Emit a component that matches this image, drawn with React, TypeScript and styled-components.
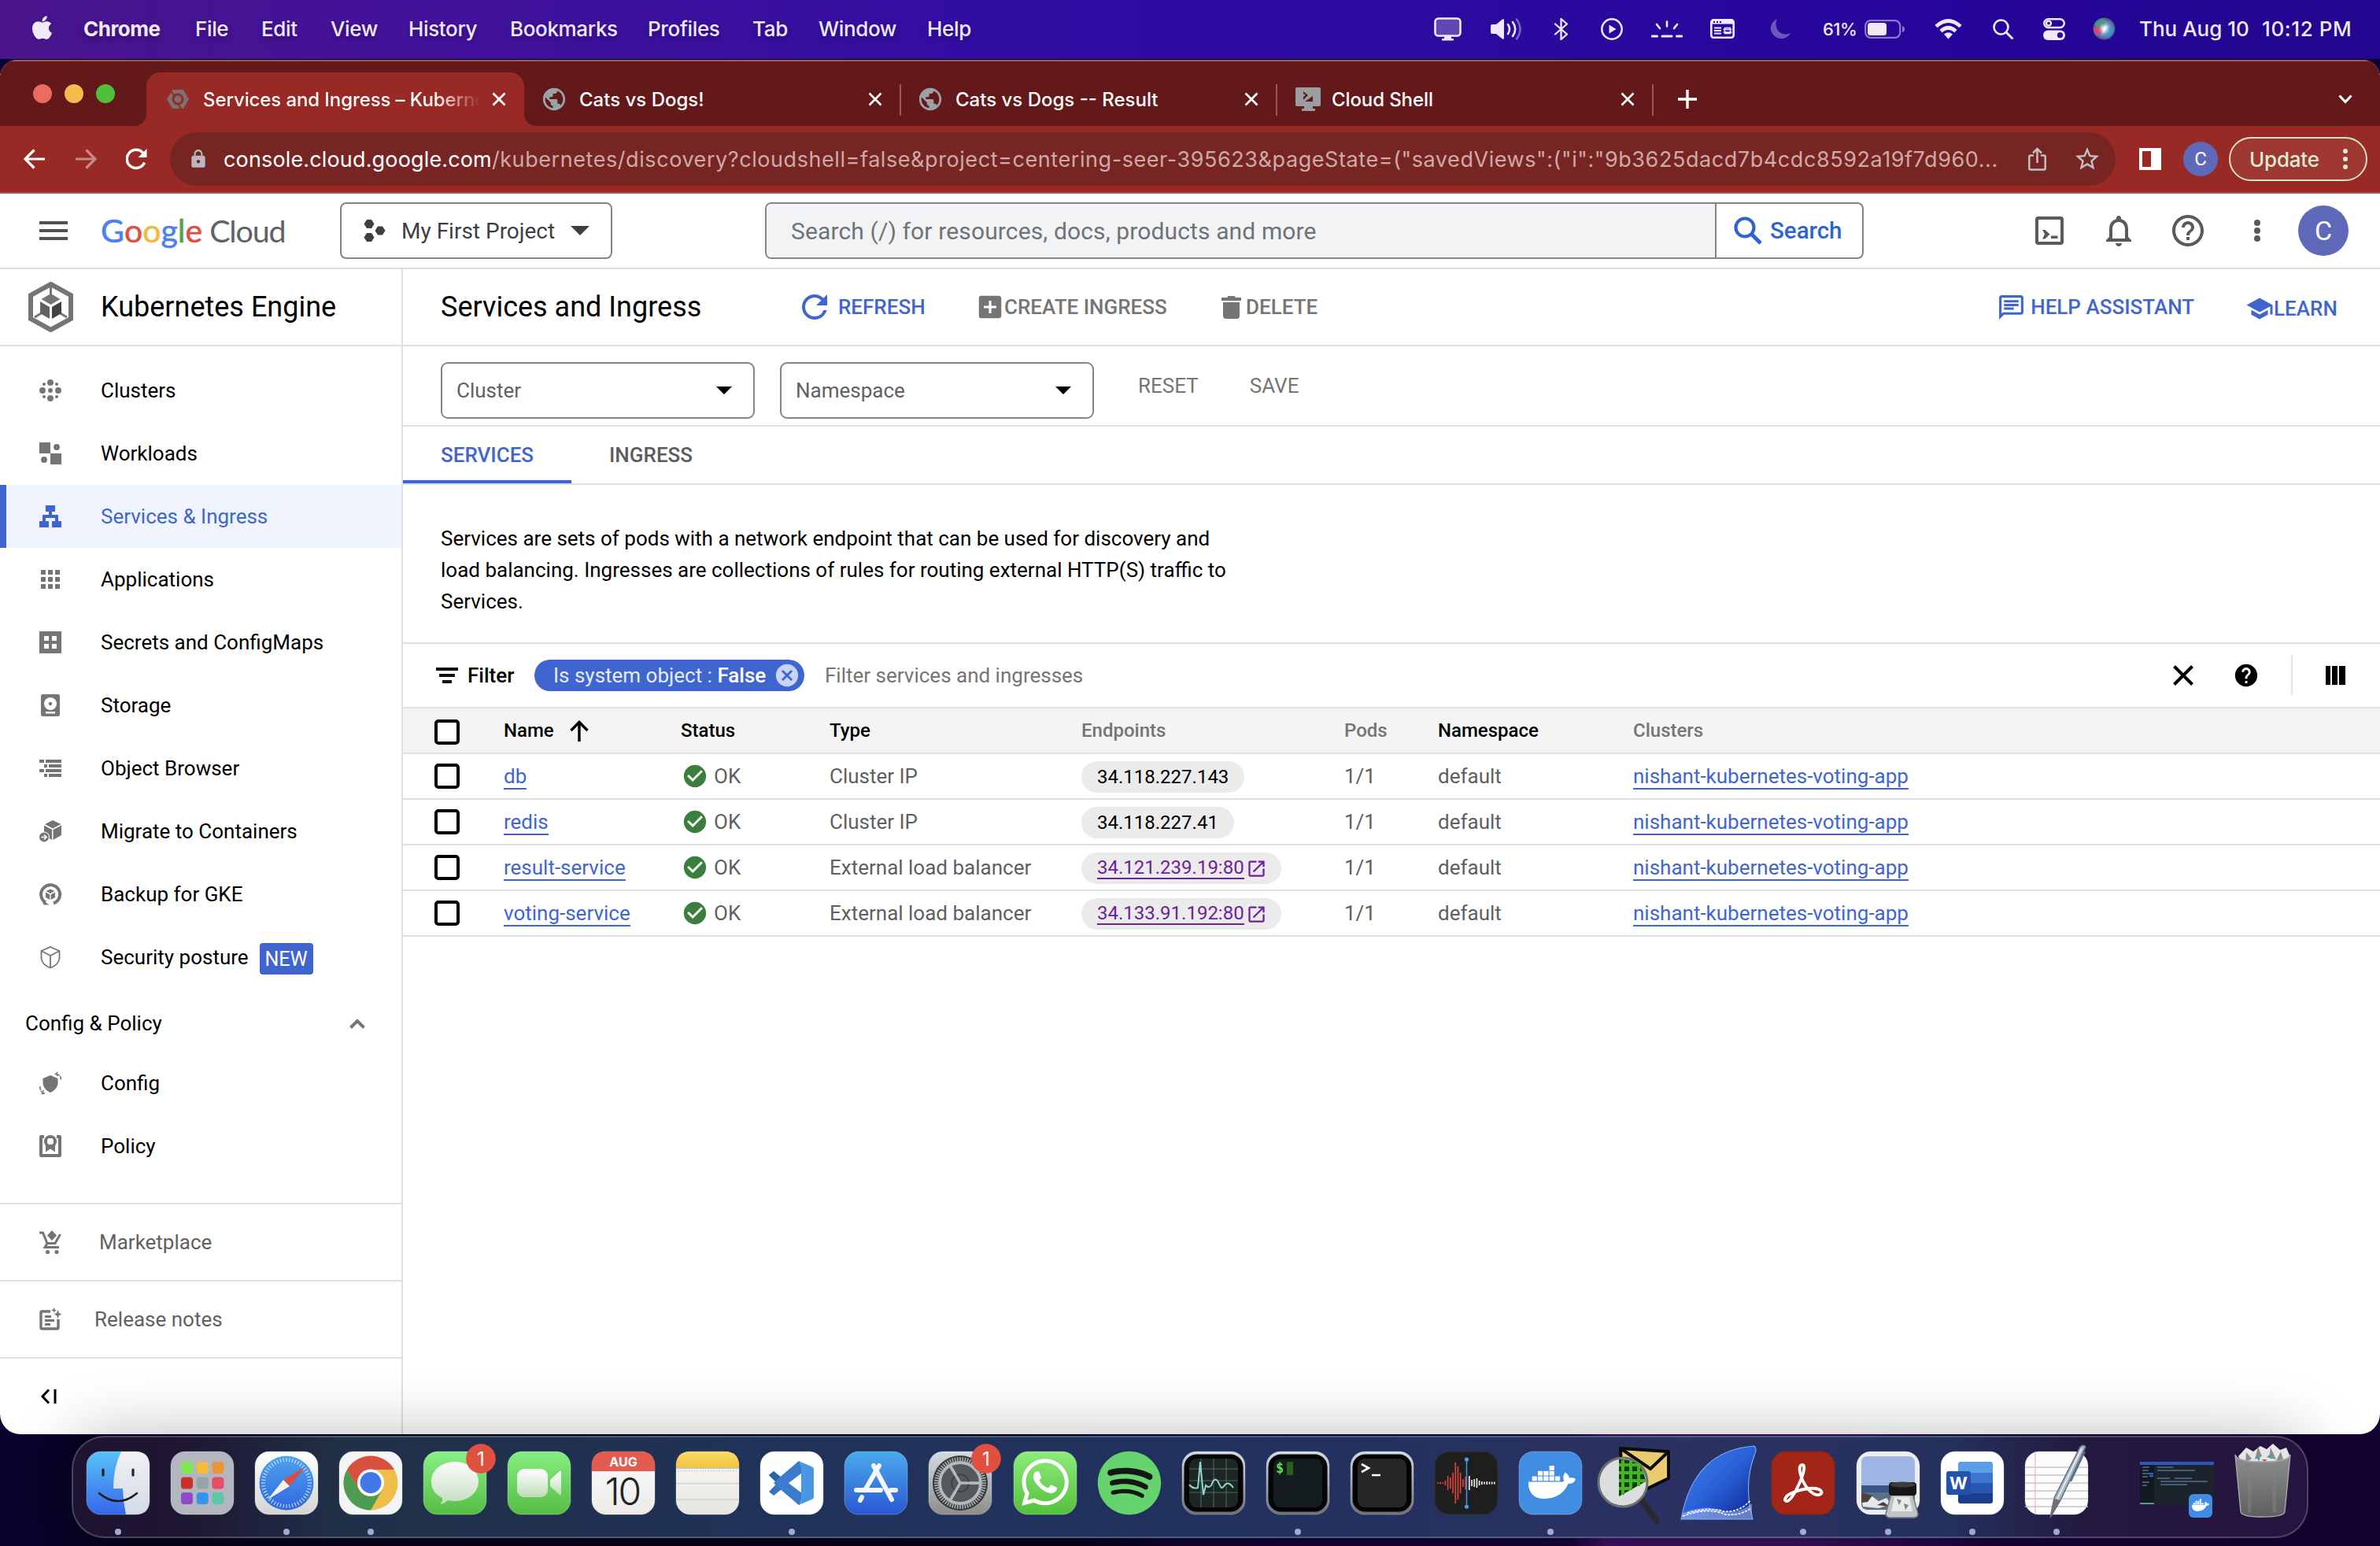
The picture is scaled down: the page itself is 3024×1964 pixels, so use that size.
import React from 'react';
import styled, { createGlobalStyle } from 'styled-components';
import { FaApple, FaDocker, FaWhatsapp, FaSpotify } from 'react-icons/fa';
import {
  MdPublic, MdLock, MdStarBorder, MdRefresh, MdHelpOutline, MdHelp, MdSchool,
  MdOutlineChat, MdNotificationsNone, MdCheckCircle, MdOpenInNew, MdCancel, MdAddBox,
} from 'react-icons/md';

const blue = '#3f66cf';
const ui = `Inter, "Liberation Sans", sans-serif`;
const roboto = `Roboto, "Liberation Sans", sans-serif`;

const Global = createGlobalStyle`
  *, *::before, *::after { box-sizing: border-box; }
  html, body { margin: 0; padding: 0; background: #07021a; overflow: hidden; }
  svg { display: block; flex: none; }
`;

const Desktop = styled.div`
  width: 3024px;
  height: 1964px;
  overflow: hidden;
  display: flex;
  flex-direction: column;
  font-family: ${ui};
  background: linear-gradient(90deg, #0b0330 0, #06021a 6%, #070218 45%, #120432 50%, #150436 66%, #3d1064 67.5%, #36105c 76%, #180338 84%, #12022f 100%);
`;

/* ---------- macOS menu bar ---------- */

const MenuBar = styled.header`
  height: 76px;
  flex: none;
  display: flex;
  align-items: center;
  padding: 0 32px 2px 40px;
  color: #efeaf8;
  font-size: 26px;
  border-bottom: 1px solid #000;
  background: linear-gradient(90deg, #49148b 0, #42129a 18%, #310da2 42%, #2a0a9f 62%, #26069a 82%, #22068f 100%);
`;
const MenuItem = styled.span<{ $w: number; $bold?: boolean; $ls?: number }>`
  width: ${(p) => p.$w}px;
  flex: none;
  white-space: nowrap;
  font-weight: ${(p) => (p.$bold ? 700 : 500)};
  letter-spacing: ${(p) => p.$ls ?? -0.35}px;
  text-shadow: 0 4px 6px rgba(0, 0, 0, 0.25);
`;
const AppleMark = styled(FaApple)`
  width: 66px;
  height: 34px;
  padding-right: 39px;
  margin-bottom: 4px;
  overflow: visible;
`;
const StatusArea = styled.div`
  margin-left: auto;
  display: flex;
  align-items: center;
`;
const StatusSlot = styled.span<{ $ml: number; $w: number; $fs?: number; $ls?: number }>`
  margin-left: ${(p) => p.$ml}px;
  width: ${(p) => p.$w}px;
  flex: none;
  white-space: nowrap;
  font-size: ${(p) => p.$fs ?? 26}px;
  font-weight: 500;
  letter-spacing: ${(p) => p.$ls ?? -0.4}px;
`;

const menu: { label: string; w: number; bold?: boolean; ls?: number }[] = [
  { label: 'Chrome', w: 142, bold: true, ls: -0.5 },
  { label: 'File', w: 84 },
  { label: 'Edit', w: 88 },
  { label: 'View', w: 99 },
  { label: 'History', w: 129 },
  { label: 'Bookmarks', w: 175 },
  { label: 'Profiles', w: 133 },
  { label: 'Tab', w: 84 },
  { label: 'Window', w: 138 },
  { label: 'Help', w: 70 },
];

const c = 'currentColor';

function TopMenu() {
  return (
    <MenuBar>
      <AppleMark />
      {menu.map((m) => (
        <MenuItem key={m.label} $w={m.w} $bold={m.bold} $ls={m.ls}>{m.label}</MenuItem>
      ))}
      <StatusArea>
        <StatusSlot $ml={0} $w={35}>
          <svg width="35" height="30" viewBox="0 0 35 30">
            <rect x="1.5" y="1.5" width="32" height="22" rx="4" fill="#5f48b6" stroke={c} strokeWidth="2.6" />
            <path d="M13 24h9v3h3v2.5H10V27h3z" fill={c} />
          </svg>
        </StatusSlot>
        <StatusSlot $ml={37} $w={40}>
          <svg width="40" height="28" viewBox="0 0 40 28">
            <path d="M0 10q0-2 2-2h5l8-6.5q2-1 2 1v23q0 2-2 1L7 20H2q-2 0-2-2z" fill={c} />
            <path d="M22 8q4 6 0 12M28 5q6.500 9 0 18" fill="none" stroke={c} strokeWidth="2.600" strokeLinecap="round" />
            <path d="M33 1.500q9 12.500 0 25" fill="none" stroke={c} strokeOpacity=".4" strokeWidth="2.600" strokeLinecap="round" />
          </svg>
        </StatusSlot>
        <StatusSlot $ml={40} $w={20}>
          <svg width="20" height="30" viewBox="0 0 20 30">
            <path d="M2 8.500l15 13-7.500 6.500V2L17 8.500 2 21.500" fill="none" stroke={c} strokeWidth="2.300" strokeLinejoin="round" strokeLinecap="round" />
          </svg>
        </StatusSlot>
        <StatusSlot $ml={40} $w={28}>
          <svg width="28" height="28" viewBox="0 0 28 28">
            <circle cx="14" cy="14" r="12.700" fill="none" stroke={c} strokeWidth="2.500" />
            <path d="M10.500 8.500v11l9-5.500z" fill={c} />
          </svg>
        </StatusSlot>
        <StatusSlot $ml={36} $w={40}>
          <svg width="40" height="22" viewBox="0 0 40 22">
            <path d="M20 1.500v6M7 5l4 5M33 5l-4 5" stroke={c} strokeWidth="2.600" strokeLinecap="round" />
            <path d="M1.500 20h6M14 20h12M32.500 20h6" stroke={c} strokeWidth="3.200" strokeLinecap="round" />
          </svg>
        </StatusSlot>
        <StatusSlot $ml={35} $w={31}>
          <svg width="31" height="25" viewBox="0 0 31 25">
            <rect x="1.300" y="1.300" width="28.400" height="22.400" rx="3" fill="none" stroke={c} strokeWidth="2.600" />
            <path d="M2 2h27v4.500H2z" fill={c} />
            <path d="M5 11.500h9M5 15h9M5 18.500h9" stroke={c} strokeWidth="2" />
            <path d="M18.500 11.500h7v7h-7zM16.500 13.500h11M16.500 17h11" fill="none" stroke={c} strokeWidth="1.400" />
            <path d="M4 4h2M8 4h2M12 4h2" stroke="#2a0a9f" strokeWidth="2" />
          </svg>
        </StatusSlot>
        <StatusSlot $ml={45} $w={27}>
          <svg width="27" height="28" viewBox="0 0 27 28">
            <path d="M9 1C1 5-2 14 4 21s17 7 22-2c-7 3-14 1-17-5-2-4-2-9 0-13z" fill={c} fillOpacity=".35" />
          </svg>
        </StatusSlot>
        <StatusSlot $ml={40} $w={46} $fs={22} $ls={-0.5}>61%</StatusSlot>
        <StatusSlot $ml={7} $w={51}>
          <svg width="51" height="24" viewBox="0 0 51 24">
            <rect x="1.200" y="1.200" width="44" height="21.600" rx="6.500" fill="none" stroke={c} strokeOpacity=".5" strokeWidth="2.200" />
            <rect x="4" y="4" width="24" height="16" rx="3.500" fill={c} />
            <path d="M48 8q3 1 3 4t-3 4z" fill={c} fillOpacity=".5" />
          </svg>
        </StatusSlot>
        <StatusSlot $ml={38} $w={35}>
          <svg width="35" height="26" viewBox="0 0 35 26">
            <path d="M2 9.500q15.500-14 31 0M8 15.500q9.500-8.500 19 0" fill="none" stroke={c} strokeWidth="4.600" />
            <path d="M17.500 25.500l-5.500-6q5.500-4.500 11 0z" fill={c} />
          </svg>
        </StatusSlot>
        <StatusSlot $ml={39} $w={26}>
          <svg width="26" height="26" viewBox="0 0 26 26">
            <circle cx="10.500" cy="10.500" r="9" fill="none" stroke={c} strokeWidth="2.600" />
            <path d="M17 17l7.500 7.500" stroke={c} strokeWidth="3" strokeLinecap="round" />
          </svg>
        </StatusSlot>
        <StatusSlot $ml={38} $w={28}>
          <svg width="28" height="28" viewBox="0 0 28 28">
            <rect x="1.200" y="1.200" width="25.600" height="10.800" rx="5.400" fill="none" stroke={c} strokeWidth="2.400" />
            <circle cx="7" cy="6.600" r="3" fill="none" stroke={c} strokeWidth="2.400" />
            <rect x="0" y="15.500" width="28" height="12.500" rx="6.200" fill={c} />
            <circle cx="21.500" cy="21.700" r="3.600" fill="#2a0a9f" />
          </svg>
        </StatusSlot>
        <StatusSlot $ml={35} $w={29}>
          <svg width="29" height="29" viewBox="0 0 29 29">
            <defs>
              <radialGradient id="siri" cx=".5" cy=".5" r=".6">
                <stop offset="0" stopColor="#f3f0fa" />
                <stop offset=".35" stopColor="#8aa6d8" />
                <stop offset="1" stopColor="#2b3a66" />
              </radialGradient>
              <radialGradient id="siriGlow">
                <stop offset="0" stopColor="#fff" />
                <stop offset="1" stopColor="#fff" stopOpacity="0" />
              </radialGradient>
            </defs>
            <circle cx="14.500" cy="14.500" r="14" fill="url(#siri)" />
            <path d="M2 9a14 14 0 0 1 12-8q4 6 0 12-6 3-12-4z" fill="#3f9d7a" fillOpacity=".75" />
            <path d="M1 12q8-2 13 3-4 8-10 8-4-4-3-11z" fill="#d8456e" fillOpacity=".8" />
            <path d="M16 16q6-6 11-4 1 9-8 15-5-5-3-11z" fill="#2f9bd0" fillOpacity=".6" />
            <circle cx="14.500" cy="14.500" r="7" fill="url(#siriGlow)" />
          </svg>
        </StatusSlot>
        <StatusSlot $ml={30} $w={156} $ls={0}>Thu Aug 10</StatusSlot>
        <StatusSlot $ml={0} $w={118} $ls={0.6}>10:12 PM</StatusSlot>
      </StatusArea>
    </MenuBar>
  );
}

/* ---------- Chrome window ---------- */

const Window = styled.main`
  height: 1746px;
  flex: none;
  display: flex;
  flex-direction: column;
  overflow: hidden;
  border-radius: 22px 22px 26px 26px;
  background: #fff;
`;
const TabStrip = styled.div`
  height: 84px;
  flex: none;
  display: flex;
  align-items: flex-end;
  background: #631819;
  border-top: 2px solid #95605f;
  color: #fff;
`;
const Lights = styled.div`
  width: 186px;
  height: 68px;
  padding: 15px 0 0 42px;
  display: flex;
  gap: 16px;
`;
const Light = styled.i<{ $c: string }>`
  width: 24px;
  height: 24px;
  border-radius: 50%;
  background: ${(p) => p.$c};
`;
const Tab = styled.div<{ $active?: boolean }>`
  width: ${(p) => (p.$active ? 480 : 478)}px;
  height: 68px;
  display: flex;
  align-items: center;
  padding: 0 23px 0 ${(p) => (p.$active ? 26 : 24)}px;
  position: relative;
  background: ${(p) => (p.$active ? '#992925' : 'transparent')};
  border-radius: 18px 18px 0 0;
  ${(p) =>
    p.$active &&
    `
    &::before, &::after {
      content: '';
      position: absolute;
      bottom: 0;
      width: 16px;
      height: 16px;
    }
    &::before { left: -16px; background: radial-gradient(circle at 0 0, transparent 16px, #992925 16.5px); }
    &::after { right: -16px; background: radial-gradient(circle at 100% 0, transparent 16px, #992925 16.5px); }
  `}
`;
const TabTitle = styled.span<{ $fade?: boolean; $ls?: number; $ml?: number }>`
  flex: 1;
  min-width: 0;
  overflow: hidden;
  white-space: nowrap;
  margin-left: ${(p) => p.$ml ?? 18}px;
  margin-right: 15px;
  font-size: 24px;
  font-weight: 500;
  letter-spacing: ${(p) => p.$ls ?? 0}px;
  ${(p) => p.$fade && '-webkit-mask-image: linear-gradient(90deg, #000 84%, transparent 100%);'}
`;
const Divider = styled.i`
  width: 2px;
  height: 40px;
  margin: 0 -1px 13px;
  background: #97595a;
`;
const TabTools = styled.div`
  flex: 1;
  height: 68px;
  display: flex;
  align-items: center;
  justify-content: space-between;
  padding: 0 35px 0 32px;
`;

const Cross = () => (
  <svg width="18" height="18" viewBox="0 0 18 18">
    <path d="M1.500 1.500l15 15M16.500 1.500l-15 15" stroke={c} strokeWidth="2.600" />
  </svg>
);
const Globe = styled(MdPublic)`
  width: 34px;
  height: 34px;
  margin: 0 -3px;
  color: #9aa2a8;
`;

function Tabs() {
  return (
    <TabStrip>
      <Lights>
        <Light $c="#ed6a5e" />
        <Light $c="#f4be4f" />
        <Light $c="#4fc138" />
      </Lights>
      <Tab $active>
        <svg width="28" height="26" viewBox="0 0 28 26">
          <path d="M7 1h14l7 12-7 12H7L0 13z" fill="#7b7173" />
          <circle cx="14" cy="13" r="6" fill="none" stroke="#992925" strokeWidth="3" />
          <path d="M5 3l6 7M14 19l5 7" stroke="#992925" strokeWidth="2" />
          <circle cx="14" cy="13" r="3.500" fill="#7b7173" />
        </svg>
        <TabTitle $fade $ls={-0.1}>Services and Ingress – Kubernetes</TabTitle>
        <Cross />
      </Tab>
      <Tab>
        <Globe />
        <TabTitle>Cats vs Dogs!</TabTitle>
        <Cross />
      </Tab>
      <Divider />
      <Tab>
        <Globe />
        <TabTitle>Cats vs Dogs -- Result</TabTitle>
        <Cross />
      </Tab>
      <Divider />
      <Tab>
        <svg width="32" height="30" viewBox="0 0 32 30">
          <path d="M2 0h28q2 0 2 2v20q0 2-2 2h-8v3h3v3H8v-3h3v-3H2q-2 0-2-2V2q0-2 2-2z" fill="#9a9ea3" />
          <path d="M10 5l6 5-6 6v-4l3-2-3-2zM22 11v7H12z" fill="#631819" />
        </svg>
        <TabTitle $ml={14} $ls={-0.1}>Cloud Shell</TabTitle>
        <Cross />
      </Tab>
      <Divider />
      <TabTools>
        <svg width="24" height="24" viewBox="0 0 24 24">
          <path d="M12 0v24M0 12h24" stroke={c} strokeWidth="3.400" />
        </svg>
        <svg width="18" height="12" viewBox="0 0 18 12">
          <path d="M1.500 1.500L9 9.500l7.500-8" fill="none" stroke={c} strokeWidth="3" />
        </svg>
      </TabTools>
    </TabStrip>
  );
}

const Toolbar = styled.div`
  height: 86px;
  flex: none;
  display: flex;
  align-items: center;
  padding: 0 16px 0 30px;
  color: #fff;
  background: #992925;
  border-bottom: 2px solid #b15452;
`;
const NavButtons = styled.div`
  width: 186px;
  display: flex;
  gap: 37px;
  align-items: center;
`;
const Omnibox = styled.div`
  width: 2472px;
  height: 68px;
  flex: none;
  display: flex;
  align-items: center;
  padding: 0 19px 0 24px;
  border-radius: 34px;
  background: #762523;
`;
const LockIcon = styled(MdLock)`
  width: 26px;
  height: 26px;
  margin: 0 19px 0 -1px;
  color: #b9b7bb;
`;
const Url = styled.span`
  flex: 1;
  white-space: nowrap;
  font-size: 27px;
  font-weight: 400;
  letter-spacing: 0.570px;
  color: #cfa9a8;
  b { font-weight: 400; color: #fff; letter-spacing: 0.150px; }
`;
const StarIcon = styled(MdStarBorder)`
  width: 36px;
  height: 36px;
  margin-left: 34px;
  margin-right: -1px;
  color: #c3bfc2;
`;
const Avatar = styled.span<{ $s: number; $fs: number; $ml: number }>`
  width: ${(p) => p.$s}px;
  height: ${(p) => p.$s}px;
  margin-left: ${(p) => p.$ml}px;
  flex: none;
  border-radius: 50%;
  background: #5e69ba;
  color: #fff;
  display: flex;
  align-items: center;
  justify-content: center;
  font-family: ${roboto};
  font-size: ${(p) => p.$fs}px;
`;
const UpdatePill = styled.div`
  margin-left: 14px;
  width: 176px;
  height: 56px;
  border: 2px solid #d6e0c9;
  border-radius: 28px;
  background: #9f3733;
  color: #d9ecd2;
  display: flex;
  align-items: center;
  justify-content: space-between;
  padding: 0 23px 0 24px;
  font-size: 26px;
  font-weight: 500;
  letter-spacing: -0.2px;
`;

function AddressBar() {
  return (
    <Toolbar>
      <NavButtons>
        <svg width="28" height="26" viewBox="0 0 28 26">
          <path d="M27 13H3M13.500 1.500L2 13l11.500 11.500" fill="none" stroke={c} strokeWidth="3.200" />
        </svg>
        <svg width="28" height="26" viewBox="0 0 28 26" opacity=".45">
          <path d="M1 13h24M14.500 1.500L26 13 14.500 24.500" fill="none" stroke={c} strokeWidth="3.200" />
        </svg>
        <svg width="27" height="28" viewBox="1 0 27 28">
          <path d="M24.500 18.500A11.600 11.600 0 1 1 22.500 6.200L25 9" fill="none" stroke={c} strokeWidth="3.400" />
          <path d="M27.500 1v11h-11z" fill={c} />
        </svg>
      </NavButtons>
      <Omnibox>
        <LockIcon />
        <Url><b>console.cloud.google.com</b>/kubernetes/discovery?cloudshell=false&amp;project=centering-seer-395623&amp;pageState=("savedViews":("i":"9b3625dacd7b4cdc8592a19f7d960...</Url>
        <svg width="23" height="30" viewBox="0 0 23 30">
          <path d="M7 10.500H2.500q-1.200 0-1.200 1.500v14.500q0 2 1.800 2h17q1.600 0 1.600-2V12q0-1.500-1.200-1.500H16M11.500 20V2.500M6 7.500l5.500-5.500L17 7.500" fill="none" stroke="#c3bfc2" strokeWidth="2.500" />
        </svg>
        <StarIcon />
      </Omnibox>
      <svg width="58" height="28" viewBox="0 0 58 28">
        <path d="M30 0h28v28H30zM34 4v20h11V4z" fill={c} fillRule="evenodd" />
      </svg>
      <Avatar $s={44} $fs={24} $ml={28}>C</Avatar>
      <UpdatePill>
        Update
        <svg width="6" height="26" viewBox="0 0 6 26" fill={c}>
          <circle cx="3" cy="3" r="3" /><circle cx="3" cy="13" r="3" /><circle cx="3" cy="23" r="3" />
        </svg>
      </UpdatePill>
    </Toolbar>
  );
}

/* ---------- Google Cloud header ---------- */

const Page = styled.div`
  flex: 1;
  display: flex;
  flex-direction: column;
  font-family: ${roboto};
  font-size: 26px;
  color: #000;
`;
const CloudHeader = styled.div`
  height: 96px;
  flex: none;
  display: flex;
  align-items: center;
  padding: 0 40px 0 50px;
  border-bottom: 2px solid #dadce0;
`;
const Logo = styled.div`
  width: 301px;
  padding-left: 42px;
  display: flex;
  align-items: baseline;
  font-family: Lato, ${roboto};
  font-size: 41px;
  line-height: 48px;
`;
const LogoLetter = styled.span<{ $c: string }>`
  color: ${(p) => p.$c};
  -webkit-text-stroke: 0.6px ${(p) => p.$c};
`;
const LogoCloud = styled.span`
  margin-left: 9px;
  font-size: 39.500px;
  letter-spacing: -1.200px;
  color: #5f6368;
`;
const ProjectPicker = styled.div`
  width: 346px;
  height: 72px;
  margin-left: 45px;
  flex: none;
  display: flex;
  align-items: center;
  padding: 0 27px 0 28px;
  border: 2px solid #80868b;
  border-radius: 8px;
  font-size: 28px;
  color: #3c4043;
  span { flex: 1; margin-left: 20px; white-space: nowrap; }
`;
const SearchBox = styled.div`
  width: 1396px;
  height: 72px;
  margin-left: 194px;
  flex: none;
  display: flex;
  border: 2px solid #80868b;
  border-radius: 8px;
  overflow: hidden;
  background: #fff;
`;
const SearchInput = styled.div`
  width: 1207px;
  padding-left: 31px;
  display: flex;
  align-items: center;
  font-size: 30px;
  letter-spacing: 0.130px;
  background: #f1f3f4;
  color: #6f7377;
  border-right: 2px solid #80868b;
`;
const SearchButton = styled.div`
  flex: 1;
  display: flex;
  align-items: center;
  gap: 10px;
  padding-left: 22px;
  font-size: 29.500px;
  font-weight: 500;
  color: #2f63d0;
`;
const HeaderTools = styled.div`
  margin-left: auto;
  display: flex;
  align-items: center;
  color: #5a5a5a;
`;
const Bell = styled(MdNotificationsNone)`
  width: 48px;
  height: 48px;
  margin-left: 46px;
`;
const HelpRound = styled(MdHelpOutline)`
  width: 48px;
  height: 48px;
  margin-left: 40px;
`;

const Caret = ({ w, h, color }: { w: number; h: number; color: string }) => (
  <svg width={w} height={h} viewBox="0 0 20 10" preserveAspectRatio="none"><path d="M0 0h20L10 10z" fill={color} /></svg>
);

function GoogleHeader() {
  const g = ['#4a82ee', '#dd5144', '#f0bb41', '#4a82ee', '#4da553', '#dd5144'];
  return (
    <CloudHeader>
      <svg width="36" height="24" viewBox="0 0 36 24" fill="#525252">
        <path d="M0 0h36v4H0zM0 10h36v4H0zM0 20h36v4H0z" />
      </svg>
      <Logo>
        {'Google'.split('').map((ch, i) => <LogoLetter key={i} $c={g[i]}>{ch}</LogoLetter>)}
        <LogoCloud>Cloud</LogoCloud>
      </Logo>
      <ProjectPicker>
        <svg width="28" height="28" viewBox="0 0 28 28" fill="#3c4043">
          <path d="M4 0h6l3.500 5.500L10 11H4L.5 5.500zM4 17h6l3.500 5.500L10 28H4L.5 22.500zM18 8.500h6l3.500 5.500-3.500 5.500h-6L14.500 14z" />
        </svg>
        <span>My First Project</span>
        <Caret w={24} h={12} color="#3c4043" />
      </ProjectPicker>
      <SearchBox>
        <SearchInput>Search (/) for resources, docs, products and more</SearchInput>
        <SearchButton>
          <svg width="36" height="36" viewBox="0 0 36 36">
            <circle cx="14" cy="14" r="11.500" fill="none" stroke={c} strokeWidth="4.200" />
            <path d="M22 22l12 12" stroke={c} strokeWidth="5" />
          </svg>
          Search
        </SearchButton>
      </SearchBox>
      <HeaderTools>
        <svg width="36" height="36" viewBox="0 0 36 36">
          <rect x="2" y="2" width="32" height="32" rx="2" fill="none" stroke={c} strokeWidth="4" />
          <path d="M9 17h3.500l6 5.500-6 6H9l3-6zM20 24.500h8.500v3.500H20z" fill={c} />
        </svg>
        <Bell />
        <HelpRound />
        <svg width="68" height="28" viewBox="0 0 68 28" fill={c}>
          <circle cx="64" cy="4" r="4" />
          <circle cx="64" cy="14" r="4" /><circle cx="64" cy="24" r="4" />
        </svg>
        <Avatar $s={64} $fs={34} $ml={48}>C</Avatar>
      </HeaderTools>
    </CloudHeader>
  );
}

/* ---------- Sidebar ---------- */

const Body = styled.div`
  flex: 1;
  display: flex;
  min-height: 0;
`;
const Sidebar = styled.nav`
  width: 512px;
  flex: none;
  display: flex;
  flex-direction: column;
  border-right: 2px solid #e0e0e0;
`;
const SideTitle = styled.div`
  height: 98px;
  flex: none;
  display: flex;
  align-items: center;
  gap: 35px;
  padding: 0 0 0 36px;
  border-bottom: 2px solid #e0e0e0;
  font-size: 36px;
  white-space: nowrap;
`;
const NavList = styled.div`
  height: 1088px;
  padding-top: 16px;
  display: flex;
  flex-direction: column;
`;
const NavRow = styled.div<{ $active?: boolean }>`
  height: 80px;
  flex: none;
  display: flex;
  align-items: center;
  gap: 50px;
  padding-left: ${(p) => (p.$active ? 42 : 50)}px;
  border-left: ${(p) => (p.$active ? `8px solid ${blue}` : '0')};
  background: ${(p) => (p.$active ? '#f0f4fe' : 'transparent')};
  color: ${(p) => (p.$active ? blue : '#000')};
  svg { color: ${(p) => (p.$active ? blue : '#757575')}; }
`;
const NewBadge = styled.span`
  margin: 4px 0 0 -36px;
  width: 68px;
  height: 40px;
  border-radius: 4px;
  background: ${blue};
  color: #fff;
  font-size: 25px;
  display: flex;
  align-items: center;
  justify-content: center;
`;
const SectionRow = styled.div`
  height: 80px;
  flex: none;
  display: flex;
  align-items: center;
  justify-content: space-between;
  padding: 8px 46px 0 32px;
`;
const FooterRow = styled.div<{ $gap: number }>`
  height: 98px;
  flex: none;
  display: flex;
  align-items: center;
  gap: ${(p) => p.$gap}px;
  padding-left: 50px;
  border-top: 2px solid #e0e0e0;
  color: #616161;
  svg { color: #757575; }
`;
const CollapseRow = styled(FooterRow)`
  svg { color: #000; }
`;

const Ico = ({ children }: { children: React.ReactNode }) => (
  <svg width="28" height="28" viewBox="0 0 28 28" fill={c} overflow="visible">{children}</svg>
);

const icons: Record<string, React.ReactNode> = {
  Clusters: (
    <Ico>
      <circle cx="14" cy="14" r="3" /><circle cx="14" cy="4" r="4" /><circle cx="14" cy="24" r="4" />
      <circle cx="4" cy="14" r="4" /><circle cx="24" cy="14" r="4" />
      <circle cx="6" cy="6" r="2" /><circle cx="22" cy="6" r="2" /><circle cx="6" cy="22" r="2" /><circle cx="22" cy="22" r="2" />
    </Ico>
  ),
  Workloads: <Ico><path d="M0 0h14v14H0zM14 14h14v14H14z" /><circle cx="22" cy="6" r="4" /><circle cx="6" cy="22" r="4" /></Ico>,
  'Services & Ingress': (
    <Ico><path d="M8 0h12v8h-4v4h8v8h4v8H16v-8h4v-4H8v4h4v8H0v-8h4v-8h8V8H8z" /></Ico>
  ),
  Applications: <Ico><path d="M2 2h6v6H2zM11 2h6v6h-6zM20 2h6v6h-6zM2 11h6v6H2zM11 11h6v6h-6zM20 11h6v6h-6zM2 20h6v6H2zM11 20h6v6h-6zM20 20h6v6h-6z" /></Ico>,
  'Secrets and ConfigMaps': <Ico><path fillRule="evenodd" d="M0 0h28v28H0zM6 6v6h6V6zM16 6v6h6V6zM6 16v6h6v-6zM16 16v6h6v-6z" /></Ico>,
  Storage: (
    <Ico>
      <rect x="2" y="0" width="24" height="28" rx="2" />
      <circle cx="14" cy="12" r="8" fill="#fff" /><circle cx="14" cy="12" r="2.200" />
      <path d="M8 22h12v2.500H8z" fill="#fff" />
    </Ico>
  ),
  'Object Browser': <Ico><path d="M0 3h6v4H0zM8 3h20v4H8zM6 9h4v4H6zM12 9h16v4H12zM0 15h6v4H0zM8 15h20v4H8zM6 21h4v4H6zM12 21h16v4H12z" /></Ico>,
  'Migrate to Containers': (
    <Ico>
      <path d="M17 0l10.500 5-10.500 5.500L7 5zM6 6.500l10 5.500V25l-4-2-6-6zM28 6.500V19l-10.500 6V12z" />
      <circle cx="6" cy="21.500" r="7" fill="#fff" /><circle cx="6" cy="21.500" r="6" />
      <path d="M2.500 21.500h6M6 18.500l3 3-3 3" fill="none" stroke="#fff" strokeWidth="1.500" />
    </Ico>
  ),
  'Backup for GKE': (
    <Ico>
      <path d="M8 24.500A12 12 0 1 1 18 25.500" fill="none" stroke={c} strokeWidth="4" />
      <path d="M3 21l9.500 6.500H5.500z" />
      <path d="M14 7.500l5.500 2.500-5.500 3-5.500-3zM8 11.500l5.300 3V21L8 18zM20 11.500V18l-5.300 3v-6.500z" />
    </Ico>
  ),
  'Security posture': (
    <Ico><path d="M14 1l11.500 5v9q-1 9-11.500 12.500Q3.500 24 2.500 15V6zM2.500 6L14 12l11.500-6M14 12v15" fill="none" stroke={c} strokeWidth="1.800" /></Ico>
  ),
  Config: (
    <Ico>
      <path d="M14 4l9.500 4v7q-1 7-9.500 11Q5.500 22 4.500 15V8z" />
      <path d="M21 2.500q6 0 6.500 7M23.500 0L20.500 2.500l3 2.500M6 27Q0 24 1 17M2.500 27.500l3.500-.5-1-4" fill="none" stroke={c} strokeWidth="1.600" strokeDasharray="5 1" />
    </Ico>
  ),
  Policy: (
    <Ico>
      <path d="M6 2H2v24h24V2h-4" fill="none" stroke={c} strokeWidth="4" strokeLinejoin="round" />
      <circle cx="14" cy="8" r="6" fill="none" stroke={c} strokeWidth="4" />
      <path d="M8 12h12v9.500l-6-4-6 4z" /><circle cx="14" cy="8" r="4" fill="#fff" />
    </Ico>
  ),
  Marketplace: (
    <Ico>
      <path d="M0 2h4.500l5.500 13.500h10L26.500 4M10 15.500L7 20.500h18" fill="none" stroke={c} strokeWidth="3" />
      <path d="M16 -1l6 6.500-6 6.500-6-6.500z" /><circle cx="10.500" cy="26.500" r="2.600" /><circle cx="22" cy="26.500" r="2.600" />
    </Ico>
  ),
  'Release notes': (
    <Ico>
      <path d="M14 4H3.500Q2 4 2 5.500v19Q2 26 3.500 26h19q1.500 0 1.500-1.500V14" fill="none" stroke={c} strokeWidth="3.400" />
      <path d="M7 9h8v3H7zM7 14h12v3H7zM7 19h7v3H7z" />
      <path d="M23.500 2l1.500 4 3.500 1.500L25 9l-1.500 4L22 9l-3.500-1.500L22 6zM18.500-1l1 2.500 2.500 1-2.500 1-1 2.500-1-2.500-2.500-1 2.500-1z" />
    </Ico>
  ),
};

const nav = [
  'Clusters', 'Workloads', 'Services & Ingress', 'Applications', 'Secrets and ConfigMaps',
  'Storage', 'Object Browser', 'Migrate to Containers', 'Backup for GKE', 'Security posture',
];

function SideNav() {
  return (
    <Sidebar>
      <SideTitle>
        <svg width="57" height="64" viewBox="0 0 57 64">
          <path d="M28.500 3L54 17v30L28.500 61 3 47V17z" fill="none" stroke="#757575" strokeWidth="6" />
          <path d="M28.500 4v14M8 45l10-6M49 45l-10-6" stroke="#757575" strokeWidth="3" />
          <path d="M28.500 15l12 7-12 7-12-7z" fill="#757575" />
          <path d="M15 25l12 7v15l-12-7z" fill="#616161" />
          <path d="M42 25l-12 7v15l12-7z" fill="#424242" />
        </svg>
        Kubernetes Engine
      </SideTitle>
      <NavList>
        {nav.map((n) => (
          <NavRow key={n} $active={n === 'Services & Ingress'}>
            {icons[n]}
            <span>{n}</span>
            {n === 'Security posture' && <NewBadge>NEW</NewBadge>}
          </NavRow>
        ))}
        <SectionRow>
          Config &amp; Policy
          <svg width="20" height="13" viewBox="0 0 20 13">
            <path d="M1.500 11.500l8.500-8.500 8.500 8.500" fill="none" stroke="#757575" strokeWidth="4" />
          </svg>
        </SectionRow>
        {['Config', 'Policy'].map((n) => (
          <NavRow key={n}>{icons[n]}<span>{n}</span></NavRow>
        ))}
      </NavList>
      <FooterRow $gap={48}>{icons.Marketplace}Marketplace</FooterRow>
      <FooterRow $gap={42}>{icons['Release notes']}Release notes</FooterRow>
      <CollapseRow $gap={0}>
        <svg width="24" height="20" viewBox="0 0 24 20">
          <path d="M12 1.500L4 10l8 8.500M20 1v18" fill="none" stroke={c} strokeWidth="3" />
        </svg>
      </CollapseRow>
    </Sidebar>
  );
}

/* ---------- Content ---------- */

const Content = styled.section`
  flex: 1;
  min-width: 0;
  display: flex;
  flex-direction: column;
`;
const TitleBar = styled.div`
  height: 98px;
  flex: none;
  display: flex;
  align-items: center;
  padding: 0 54px 0 48px;
  border-bottom: 2px solid #e0e0e0;
`;
const PageTitle = styled.h1`
  margin: 0;
  width: 451px;
  font-size: 36px;
  font-weight: 400;
  white-space: nowrap;
`;
const Action = styled.span<{ $c: string; $ml?: number; $w?: number; $gap?: number; $dy?: number }>`
  display: flex;
  align-items: center;
  flex: none;
  gap: ${(p) => p.$gap ?? 0}px;
  margin-left: ${(p) => p.$ml ?? 0}px;
  padding-top: ${(p) => p.$dy ?? 0}px;
  width: ${(p) => (p.$w ? `${p.$w}px` : 'auto')};
  color: ${(p) => p.$c};
  font-weight: 500;
  white-space: nowrap;
`;
const RefreshIcon = styled(MdRefresh)`width: 48px; height: 48px;`;
const AddIcon = styled(MdAddBox)`width: 38px; height: 38px; margin: 0 -1px 0 -5px;`;
const ChatIcon = styled(MdOutlineChat)`width: 37px; height: 37px;`;
const SchoolIcon = styled(MdSchool)`width: 36px; height: 36px;`;

const FilterRow = styled.div`
  height: 102px;
  flex: none;
  display: flex;
  align-items: flex-start;
  padding: 20px 0 0 48px;
  border-bottom: 2px solid #e0e0e0;
`;
const Select = styled.div`
  width: 399px;
  height: 72px;
  margin-right: 32px;
  display: flex;
  align-items: center;
  justify-content: space-between;
  padding: 0 27px 0 18px;
  border: 2px solid #80868b;
  border-radius: 9px;
  color: #616161;
`;
const GhostButton = styled.span<{ $ml: number }>`
  margin-left: ${(p) => p.$ml}px;
  line-height: 60px;
  color: #757575;
  font-size: 26px;
`;
const TabRow = styled.div`
  height: 74px;
  flex: none;
  display: flex;
  border-bottom: 2px solid #e0e0e0;
`;
const PageTab = styled.div<{ $active?: boolean; $w: number }>`
  width: ${(p) => p.$w}px;
  height: 72px;
  display: flex;
  align-items: center;
  padding: ${(p) => (p.$active ? 4 : 0)}px 0 0 48px;
  font-weight: 500;
  color: ${(p) => (p.$active ? blue : '#5c5c5c')};
  border-bottom: ${(p) => (p.$active ? `4px solid ${blue}` : '0')};
`;
const Intro = styled.p`
  margin: 0;
  height: 202px;
  flex: none;
  padding: 48px 0 0 48px;
  line-height: 40px;
  border-bottom: 2px solid #e0e0e0;
  white-space: pre-line;
`;
const FilterBar = styled.div`
  height: 82px;
  flex: none;
  display: flex;
  align-items: center;
  padding: 0 44px 0 42px;
  border-bottom: 2px solid #e0e0e0;
`;
const FilterLabel = styled.span`
  width: 97px;
  padding-left: 12px;
  font-weight: 500;
`;
const FilterChip = styled.span`
  width: 343px;
  height: 40px;
  flex: none;
  display: flex;
  align-items: center;
  justify-content: space-between;
  border-radius: 20px;
  padding: 0 5px 0 24px;
  background: ${blue};
  color: #e6ecfb;
  white-space: pre;
  b { font-weight: 500; color: #fff; }
`;
const ChipCancel = styled(MdCancel)`width: 34px; height: 34px; color: #c9d4f4;`;
const Placeholder = styled.span`
  flex: 1;
  margin-left: 26px;
  color: #757575;
`;
const BarTools = styled.div`
  display: flex;
  align-items: center;
`;
const HelpFilled = styled(MdHelp)`width: 34px; height: 34px; margin: 0 40px 0 50px;`;
const BarDivider = styled.i`width: 2px; height: 50px; background: #e4e4e4; margin-right: 42px;`;

const GridRow = styled.div<{ $head?: boolean }>`
  height: 58px;
  flex: none;
  display: grid;
  grid-template-columns: 128px 225px 189px 320px 334px 119px 248px 1fr;
  align-items: center;
  border-bottom: 2px solid #e0e0e0;
  background: ${(p) => (p.$head ? '#f4f4f4' : '#fff')};
  color: ${(p) => (p.$head ? '#000' : '#5f5f5f')};
  font-size: ${(p) => (p.$head ? 24 : 26)}px;
  font-weight: ${(p) => (p.$head ? 500 : 400)};
  white-space: nowrap;
`;
const Check = styled.i<{ $dy?: number }>`
  width: 32px;
  height: 32px;
  margin: ${(p) => p.$dy ?? 0}px 0 0 40px;
  border: 4px solid #000;
  border-radius: 5px;
  background: #fff;
`;
const HeadCell = styled.span<{ $muted?: boolean }>`
  display: flex;
  align-items: center;
  gap: 20px;
  color: ${(p) => (p.$muted ? '#757575' : '#000')};
`;
const Link = styled.a`
  color: ${blue};
  border-bottom: 2px solid ${blue};
`;
const StatusCell = styled.span`
  display: flex;
  align-items: center;
  gap: 7px;
`;
const OkIcon = styled(MdCheckCircle)`
  width: 34px;
  height: 34px;
  margin: 0 0 0 1px;
  color: #3b7f3f;
`;
const IpChip = styled.span<{ $link?: boolean }>`
  display: inline-flex;
  align-items: center;
  height: 40px;
  padding: 0 ${(p) => (p.$link ? 18 : 20)}px 0 20px;
  border-radius: 20px;
  background: #ebebeb;
  color: ${(p) => (p.$link ? '#6f2199' : '#000')};
  font-size: 24px;
  margin-top: 2px;
  u { text-decoration: none; line-height: 26px; border-bottom: 2px solid #6f2199; }
`;
const OutIcon = styled(MdOpenInNew)`width: 27px; height: 27px; margin-left: 2px;`;

const services = [
  { name: 'db', type: 'Cluster IP', ip: '34.118.227.143' },
  { name: 'redis', type: 'Cluster IP', ip: '34.118.227.41' },
  { name: 'result-service', type: 'External load balancer', ip: '34.121.239.19:80', link: true },
  { name: 'voting-service', type: 'External load balancer', ip: '34.133.91.192:80', link: true },
];

function Services() {
  return (
    <Content>
      <TitleBar>
        <PageTitle>Services and Ingress</PageTitle>
        <Action $c={blue} $gap={6} $w={233}><RefreshIcon />REFRESH</Action>
        <Action $c="#757575" $w={308}><AddIcon />CREATE INGRESS</Action>
        <Action $c="#757575" $gap={6}>
          <svg width="25" height="29" viewBox="0 0 25 29" fill={c}>
            <path d="M0 2h7l1.500-2h8L18 2h7v4H0zM2 8h21v17q0 4-4 4H6q-4 0-4-4z" />
          </svg>
          DELETE
        </Action>
        <Action $c={blue} $gap={6} $ml={863}><ChatIcon />HELP ASSISTANT</Action>
        <Action $c={blue} $ml={65} $dy={3}><SchoolIcon />LEARN</Action>
      </TitleBar>
      <FilterRow>
        <Select>Cluster<Caret w={20} h={10} color="#000" /></Select>
        <Select>Namespace<Caret w={20} h={10} color="#000" /></Select>
        <GhostButton $ml={24}>RESET</GhostButton>
        <GhostButton $ml={65}>SAVE</GhostButton>
      </FilterRow>
      <TabRow>
        <PageTab $active $w={214}>SERVICES</PageTab>
        <PageTab $w={214}>INGRESS</PageTab>
      </TabRow>
      <Intro>
        {'Services are sets of pods with a network endpoint that can be used for discovery and\nload balancing. Ingresses are collections of rules for routing external HTTP(S) traffic to\nServices.'}
      </Intro>
      <FilterBar>
        <svg width="28" height="20" viewBox="0 0 28 20"><path d="M0 0h28v4H0zM4 8h20v4H4zM8 16h12v4H8z" fill="#111" /></svg>
        <FilterLabel>Filter</FilterLabel>
        <FilterChip><span>Is system object : <b>False</b></span><ChipCancel /></FilterChip>
        <Placeholder>Filter services and ingresses</Placeholder>
        <BarTools>
          <svg width="26" height="26" viewBox="0 0 26 26"><path d="M1.500 1.500l23 23M24.500 1.500l-23 23" stroke="#000" strokeWidth="4" /></svg>
          <HelpFilled />
          <BarDivider />
          <svg width="25" height="24" viewBox="0 0 25 24"><path d="M0 0h6v24H0zM8 0h7v24H8zM17 0h8v24h-8z" fill="#000" /></svg>
        </BarTools>
      </FilterBar>
      <GridRow $head>
        <Check $dy={4} />
        <HeadCell>
          Name
          <svg width="24" height="27" viewBox="0 0 24 27"><path d="M12 27V3M1.500 13L12 2.500 22.500 13" fill="none" stroke="#000" strokeWidth="3.400" /></svg>
        </HeadCell>
        <HeadCell>Status</HeadCell>
        <HeadCell>Type</HeadCell>
        <HeadCell $muted>Endpoints</HeadCell>
        <HeadCell $muted>Pods</HeadCell>
        <HeadCell>Namespace</HeadCell>
        <HeadCell $muted>Clusters</HeadCell>
      </GridRow>
      {services.map((s) => (
        <GridRow key={s.name}>
          <Check />
          <span><Link>{s.name}</Link></span>
          <StatusCell><OkIcon />OK</StatusCell>
          <span>{s.type}</span>
          <span>
            <IpChip $link={s.link}>{s.link ? <><u>{s.ip}</u><OutIcon /></> : s.ip}</IpChip>
          </span>
          <span>1/1</span>
          <span>default</span>
          <span><Link>nishant-kubernetes-voting-app</Link></span>
        </GridRow>
      ))}
    </Content>
  );
}

/* ---------- Dock ---------- */

const DockArea = styled.footer`
  height: 142px;
  flex: none;
  padding: 2px 91px 10px;
  position: relative;
`;
const Dock = styled.div`
  height: 130px;
  display: flex;
  align-items: flex-start;
  padding: 18px 0 0 3px;
  border: 2px solid rgba(255, 255, 255, 0.2);
  border-radius: 42px;
  background-image: linear-gradient(90deg, #1e1330 0, #1e1633 5%, #203047 12%, #20325a 33%, #22315f 55%, #2b3162 72%, #24305c 84%, #23193f 90%, #251440 100%);
  background-origin: border-box;
  box-shadow: 0 0 84px rgba(0, 0, 0, 0.27);
`;
const DockSlot = styled.div`
  width: 107.100px;
  flex: none;
  display: flex;
  flex-direction: column;
  align-items: center;
  gap: 18px;
`;
const RunningDot = styled.i`
  width: 8px;
  height: 8px;
  border-radius: 50%;
  background: #a3a9d4;
`;
const DockDivider = styled.i`
  width: 2px;
  height: 94px;
  margin: -2px 29px 0 24px;
  background: rgba(255, 255, 255, 0.25);
`;

const sans = 'Inter, sans-serif';
const Tile = ({ fill, stroke }: { fill: string; stroke?: string }) => (
  <rect x="0" y="0" width="80" height="80" rx="18" fill={fill} stroke={stroke ?? 'rgba(255,255,255,.25)'} strokeWidth="1" />
);
const Badge = () => (
  <>
    <circle cx="73" cy="9" r="18.800" fill="#e1503f" />
    <text x="73" y="17.500" fontFamily={sans} fontSize="24" fill="#fff" textAnchor="middle">1</text>
  </>
);
const Grad = ({ id, a, b }: { id: string; a: string; b: string }) => (
  <linearGradient id={id} x1="0" y1="0" x2="0" y2="1">
    <stop offset="0" stopColor={a} /><stop offset="1" stopColor={b} />
  </linearGradient>
);

const ticks = Array.from({ length: 48 }, (_, i) => i * 7.5);
const teeth = Array.from({ length: 60 }, (_, i) => i * 6);

const apps: { id: string; run?: boolean; art: React.ReactNode }[] = [
  { id: 'finder', run: true, art: (
    <>
      <Grad id="fd" a="#58c2f8" b="#3566ea" /><Grad id="fd2" a="#f0f1f3" b="#d3dae6" />
      <Tile fill="url(#fd)" />
      <path d="M44 0h18q18 0 18 18v44q0 18-18 18H50q-3.500-16-4-33H34Q34 20 44 0z" fill="url(#fd2)" />
      <path d="M21 23v7M59 23v7" stroke="#222" strokeWidth="3.200" strokeLinecap="round" />
      <path d="M16 53q24 20 48 0" fill="none" stroke="#1c1c1c" strokeWidth="2.600" strokeLinecap="round" />
    </>
  ) },
  { id: 'launchpad', art: (
    <>
      <Tile fill="#b3b6bf" />
      {['#7ee64f', '#f5bb3c', '#ec9438', '#c9302a', '#98a2a8', '#ea4c63', '#9048cc', '#3494f4', '#5cc7a6'].map((f, i) => (
        <rect key={f} x={13 + (i % 3) * 19.700} y={13 + Math.floor(i / 3) * 19.500} width="15" height="15" rx="4" fill={f} />
      ))}
    </>
  ) },
  { id: 'safari', run: true, art: (
    <>
      <Grad id="sf" a="#4da2ee" b="#3068de" /><Grad id="sf2" a="#ffffff" b="#d4d4d4" />
      <Tile fill="url(#sf2)" />
      <circle cx="40" cy="40" r="34.500" fill="url(#sf)" />
      {ticks.map((a) => <path key={a} d="M40 8v5" stroke="#d6e6fa" strokeWidth="1" transform={`rotate(${a} 40 40)`} />)}
      <path d="M64 19L36 36l8 8z" fill="#de4b41" /><path d="M16 61l20-25 8 8z" fill="#f2f2f2" />
    </>
  ) },
  { id: 'chrome', run: true, art: (
    <>
      <Tile fill="#f4f5f7" />
      <circle cx="40" cy="40" r="34.500" fill="#f0bf49" />
      <path d="M10 23a34.500 34.500 0 0 1 60 0H40a17 17 0 0 0-15 25z" fill="#d9503f" />
      <path d="M10 23a34.500 34.500 0 0 0 30 51.500L55 48a17 17 0 0 1-30 0z" fill="#4e9b53" />
      <circle cx="40" cy="39.500" r="17" fill="#fff" /><circle cx="40" cy="39.500" r="13.500" fill="#4379e6" />
    </>
  ) },
  { id: 'messages', art: (
    <>
      <Grad id="ms" a="#87f184" b="#55bd45" /><Grad id="ms2" a="#fdfdfd" b="#c5dcbf" />
      <Tile fill="url(#ms)" />
      <path d="M40 13c17 0 30 11 30 25S57 63 40 63q-5 0-9-1.200Q27 66 21 67q4-4 3-8-14-7-14-21c0-14 13-25 30-25z" fill="url(#ms2)" />
      <Badge />
    </>
  ) },
  { id: 'facetime', art: (
    <>
      <Grad id="ft" a="#86ee80" b="#56bd45" /><Grad id="ft2" a="#ffffff" b="#bfdcb8" />
      <Tile fill="url(#ft)" />
      <rect x="12" y="22" width="39" height="36" rx="9" fill="url(#ft2)" />
      <path d="M54 36l12-11q2-1 2 1v28q0 2-2 1L54 44z" fill="url(#ft2)" />
    </>
  ) },
  { id: 'calendar', art: (
    <>
      <Grad id="cl" a="#fbfbfa" b="#ecebe8" />
      <Tile fill="url(#cl)" />
      <path d="M0 25v-7Q0 0 18 0h44q18 0 18 18v7z" fill="#e25d50" />
      <text x="40" y="19" fontFamily={sans} fontSize="16" fontWeight="700" fill="#fff" textAnchor="middle">AUG</text>
      <text x="39" y="68" fontFamily={sans} fontSize="48" fontWeight="300" letterSpacing="-2" fill="#222" textAnchor="middle">10</text>
    </>
  ) },
  { id: 'notes', art: (
    <>
      <Grad id="nt" a="#fbfbf8" b="#e6e4dd" /><Grad id="nt2" a="#fadb68" b="#f3c43d" />
      <Tile fill="url(#nt)" />
      <path d="M0 20v-2Q0 0 18 0h44q18 0 18 18v2z" fill="url(#nt2)" />
      <path d="M0 21h80" stroke="#bdb49a" strokeWidth="1.600" />
      <path d="M2 24.500h76" stroke="#c9c7c0" strokeWidth="1.600" strokeDasharray="1.500 2" />
      <path d="M0 40.500h80M0 61h80" stroke="#d3d1cd" strokeWidth="1.600" />
    </>
  ) },
  { id: 'vscode', run: true, art: (
    <>
      <Tile fill="#fff" />
      <path d="M11 30l6-5 32 26v17z" fill="#2b62a8" />
      <path d="M11 51l6 5 32-26V12z" fill="#3672c2" />
      <path d="M11 30l6-5 12 10-6 6z" fill="#2b62a8" />
      <path d="M49 12l16 7q3 1 3 4v34q0 3-3 4l-16 7q3-2 3-6V18q0-4-3-6z" fill="#4a95e4" />
      <path d="M49 12q3 2 3 8v8L36 40l16 12v8q0 6-3 8L22 45l-5-5 5-5z" fill="#3a7ccb" />
      <path d="M52 28v24L36 40z" fill="#fff" />
    </>
  ) },
  { id: 'appstore', art: (
    <>
      <Grad id="as" a="#4aaaec" b="#2a57d3" />
      <Tile fill="url(#as)" />
      <path d="M37 18l23 43M44 18L26 49M22 58l-2 4M15 49h31M59 49h6" stroke="#f3f6fa" strokeWidth="6" strokeLinecap="round" />
    </>
  ) },
  { id: 'settings', art: (
    <>
      <Grad id="st" a="#d3dce3" b="#8f8c88" />
      <Tile fill="url(#st)" />
      <circle cx="40" cy="40" r="35" fill="#33373a" />
      {teeth.map((a) => <path key={a} d="M40 7v5" stroke="#a9adb0" strokeWidth="1.700" transform={`rotate(${a} 40 40)`} />)}
      <circle cx="40" cy="40" r="26" fill="#54585b" stroke="#b4b8bb" strokeWidth="4" />
      {[0, 120, 240].map((a) => <path key={a} d="M40 40h25" stroke="#b4b8bb" strokeWidth="3.600" transform={`rotate(${a} 40 40)`} />)}
      <circle cx="40" cy="40" r="11" fill="#54585b" fillOpacity=".6" stroke="#3a3d40" strokeWidth="1.500" />
      <path d="M40 40h20M40 40L30 22.700M40 40L30 57.300" stroke="#b4b8bb" strokeWidth="3.200" />
      <Badge />
    </>
  ) },
  { id: 'whatsapp', art: (
    <>
      <Grad id="wa" a="#8ceb7b" b="#55c13b" />
      <Tile fill="url(#wa)" />
      <FaWhatsapp x={6} y={5} size={68} color="#fff" />
    </>
  ) },
  { id: 'spotify', art: (
    <>
      <circle cx="40" cy="40" r="40" fill="#151515" />
      <FaSpotify x={-1.5} y={-1.5} size={83} color="#66d46e" />
    </>
  ) },
  { id: 'activity', art: (
    <>
      <Grad id="bz" a="#cfdce0" b="#6d6d70" />
      <Tile fill="url(#bz)" />
      <rect x="2.500" y="3.500" width="75" height="73" rx="16" fill="#050505" />
      <rect x="9" y="9" width="62" height="62" rx="9" fill="#1d2624" />
      <path d="M24 9v62M40 9v62M56 9v62M9 22h62M9 37h62M9 52h62" stroke="#4c6b62" strokeWidth="1" />
      <path d="M9 42q5 6 11 4l3-33 4 42 3-12q4 4 7 0 5-14 10-2 3 8 6 3 5-8 12 2" fill="none" stroke="#8fd8c5" strokeWidth="2" />
    </>
  ) },
  { id: 'iterm', run: true, art: (
    <>
      <Tile fill="url(#bz)" />
      <rect x="2.500" y="3.500" width="75" height="73" rx="16" fill="#050505" />
      <rect x="9" y="9" width="62" height="62" rx="9" fill="#151c20" />
      <text x="12" y="27" fontFamily='"DejaVu Sans Mono", monospace' fontSize="17" fontWeight="700" fill="#5dde45">$</text>
      <rect x="26" y="13" width="8" height="17" fill="#27601c" />
    </>
  ) },
  { id: 'terminal', art: (
    <>
      <Tile fill="url(#bz)" />
      <rect x="2.500" y="3.500" width="75" height="73" rx="16" fill="#050505" />
      <rect x="9" y="9" width="62" height="62" rx="9" fill="#262626" />
      <path d="M14 16l9 5-9 5M27 30h11" fill="none" stroke="#fff" strokeWidth="2.600" />
    </>
  ) },
  { id: 'voice', art: (
    <>
      <Tile fill="#1e1e1f" stroke="#333" />
      {[2, 3, 2, 6, 18, 14, 26, 52, 42, 26, 10, 16].map((h, i) => (
        <rect key={i} x={3 + i * 3.200} y={40 - h / 2} width="1.700" height={h} fill="#d9443a" />
      ))}
      {[18, 8, 10, 12, 6, 4, 3, 4, 3, 3, 3].map((h, i) => (
        <rect key={i} x={43 + i * 3.200} y={40 - h / 2} width="1.700" height={h} fill="#e8e8e8" />
      ))}
      <path d="M40.500 10v60" stroke="#3d8fe0" strokeWidth="1.600" />
      <circle cx="40.500" cy="10" r="2.600" fill="#4b9fee" /><circle cx="40.500" cy="70" r="2.600" fill="#4b9fee" />
    </>
  ) },
  { id: 'docker', run: true, art: (
    <>
      <Tile fill="#428de4" />
      <FaDocker x={12} y={9} size={60} color="#fff" />
    </>
  ) },
  { id: 'mailscan', art: (
    <>
      <path d="M22-4l61 4v34L50 50 24 40z" fill="#e9cb70" stroke="#0a0a0a" strokeWidth="4" strokeLinejoin="round" />
      <path d="M22-4l38 26L83 0" fill="none" stroke="#0a0a0a" strokeWidth="4" />
      <path d="M49 62l19 26" stroke="#2a2a2e" strokeWidth="8" strokeLinecap="round" />
      <circle cx="25" cy="39" r="31" fill="#dcdddd" stroke="#6d6f71" strokeWidth="3" />
      <path d="M20 10q30-2 34 28L20 57z" fill="#153c10" />
      <path d="M25 11v44M35 12v37M45 17v27M20 17h28M20 27h33M20 37h34M20 47h16" stroke="#45b326" strokeWidth="4" />
    </>
  ) },
  { id: 'wireshark', art: (
    <>
      <linearGradient id="ws" x1="0" y1="0" x2="1" y2="1">
        <stop offset="0" stopColor="#3f87ef" /><stop offset=".5" stopColor="#2b60d8" /><stop offset="1" stopColor="#0b2390" />
      </linearGradient>
      <path d="M-8 86Q8-2 85-7q4 4 0 12-14 38-2 81z" fill="url(#ws)" stroke="#7aa7f0" strokeWidth="1.200" />
      <path d="M-6 78q30-12 50-2 20 4 38-10v20H-8z" fill="#a9c1f0" fillOpacity=".55" />
      <path d="M-6 82q34-12 54-2 18 2 33-8M0 78q30-8 46-2 20 2 34-14" fill="none" stroke="#fff" strokeWidth="1.600" strokeDasharray="3 1.500" />
    </>
  ) },
  { id: 'acrobat', run: true, art: (
    <>
      <Tile fill="#a32517" stroke="#8d2417" />
      <path d="M39 17c-6 0-3 12 1 21 5 10 13 18 20 17 6-1 4-7-4-8-10-1-20 1-31 6-9 4-10 11-5 10 6-2 13-17 18-29 3-8 5-17 1-17z" fill="none" stroke="#fff" strokeWidth="3.800" />
    </>
  ) },
  { id: 'preview', run: true, art: (
    <>
      <Tile fill="#eeeeee" />
      <path d="M6 14q0-8 8-8h52q8 0 8 8v29H6z" fill="#9db6e4" />
      <path d="M6 43h68v12H6z" fill="#3a578c" /><path d="M6 52h68v14q0 8-8 8H14q-8 0-8-8z" fill="#5c6f84" />
      <path d="M6 60l14-3 8 6 10-4 6 8-16 5-20-2z" fill="#e3e6ea" /><path d="M6 52l14 4-6 8-8 1zM26 68l8-4 8 6z" fill="#4e4238" />
      <path d="M44 54h27l7 25q0 5-6 5H43q-6 0-6-5z" fill="#bfc3c4" stroke="#70757a" strokeWidth="1.500" />
      <path d="M48 58h19l4 18H44z" fill="#e8eaea" /><path d="M51 60l6 2-3 6zM60 66l6 2-4 6zM50 72l6-2z" fill="#7c8184" />
      <rect x="41" y="39" width="35" height="17" rx="4" fill="#161616" /><ellipse cx="58.500" cy="42" rx="16" ry="3.500" fill="#3c3c3c" />
    </>
  ) },
  { id: 'word', run: true, art: (
    <>
      <Tile fill="#fff" />
      <path d="M22 16q0-3 3-3h38q3 0 3 3v11H22z" fill="#5a9fe6" /><path d="M22 27h44v13H22z" fill="#3c76cf" />
      <path d="M22 40h44v13H22z" fill="#2757b5" /><path d="M22 53h44v10q0 3-3 3H25q-3 0-3-3z" fill="#1c3d8c" />
      <rect x="7" y="25" width="31" height="30" rx="3" fill="#2450ae" />
      <text x="22.500" y="48" fontFamily={sans} fontSize="22" fontWeight="700" fill="#fff" textAnchor="middle">W</text>
    </>
  ) },
  { id: 'textedit', run: true, art: (
    <>
      <Tile fill="#fcfcfc" />
      <path d="M0 20h80M0 30h80M0 40h80M0 50h80M0 60h80M0 70h80" stroke="#c6c6c6" strokeWidth="1.400" />
      <path d="M13 0v80" stroke="#efb9b2" strokeWidth="1.200" />
      <path d="M70-6q4-4 7 0L45 62l-13 22 5-25z" fill="#a9b5c0" stroke="#5f6c78" strokeWidth="1.400" />
      <path d="M72-4L41 60" stroke="#e3e9ee" strokeWidth="2" /><path d="M37 60l8 2-13 22z" fill="#6e7073" />
      <path d="M76 0L58 38" stroke="#4f6f8f" strokeWidth="2" />
    </>
  ) },
];

function DockBar() {
  return (
    <DockArea>
      <Dock>
        {apps.map((a) => (
          <DockSlot key={a.id}>
            <svg width="80" height="80" viewBox="0 0 80 80" overflow="visible">{a.art}</svg>
            {a.run && <RunningDot />}
          </DockSlot>
        ))}
        <DockDivider />
        <svg width="94" height="84" viewBox="0 0 94 84">
          <rect x="0" y="13" width="94" height="54" fill="#1b242c" />
          <path d="M0 13h94v4H0z" fill="#2b59c0" /><path d="M0 17h18v50H0z" fill="#12181f" />
          <path d="M3 20h9M3 24h8M3 28h10M3 32h7M3 39h9M3 43h6M22 20h20M22 24h48M22 34h16M44 34h22M26 38h60M26 42h34" stroke="#56708c" strokeWidth="1.300" />
          <path d="M12 28h5M12 31h5" stroke="#2f6be0" strokeWidth="2" /><path d="M0 65h18v2H0z" fill="#3aa98c" />
          <rect x="62" y="54" width="30" height="30" rx="6" fill="#428de4" />
          <FaDocker x={66} y={57} size={22} color="#fff" />
        </svg>
        <svg width="124" height="94" viewBox="-27 2 124 94" overflow="visible">
          <Grad id="tr" a="#8d8f91" b="#5c5e60" />
          <path d="M4 8l10-11 9 5 9-7 8 4 8-7 9 8 8-3 5 12-8 10H10z" fill="#e6e6e4" />
          <path d="M14 3l7 8-8 5zM29-4l5 12-9 4zM45-3l-2 13 9 2zM58 2l-6 12 9-2z" fill="#8b8c8c" />
          <path d="M26 8l6 2-2 4zM40 9l5-4 2 6z" fill="#3aa0b0" /><path d="M34 12l6 0-2 4z" fill="#cf5a48" />
          <path d="M0 6q2 9 35 9t35-9l-7 72q0 7-28 7T7 78z" fill="url(#tr)" stroke="#a7a9ab" strokeWidth="1.400" />
          <path d="M16 18q4 30 2 62M52 18q-4 30-2 62" stroke="#7f8183" strokeWidth="5" strokeOpacity=".5" fill="none" />
        </svg>
      </Dock>
    </DockArea>
  );
}

export default function App() {
  return (
    <Desktop>
      <Global />
      <TopMenu />
      <Window>
        <Tabs />
        <AddressBar />
        <Page>
          <GoogleHeader />
          <Body>
            <SideNav />
            <Services />
          </Body>
        </Page>
      </Window>
      <DockBar />
    </Desktop>
  );
}
